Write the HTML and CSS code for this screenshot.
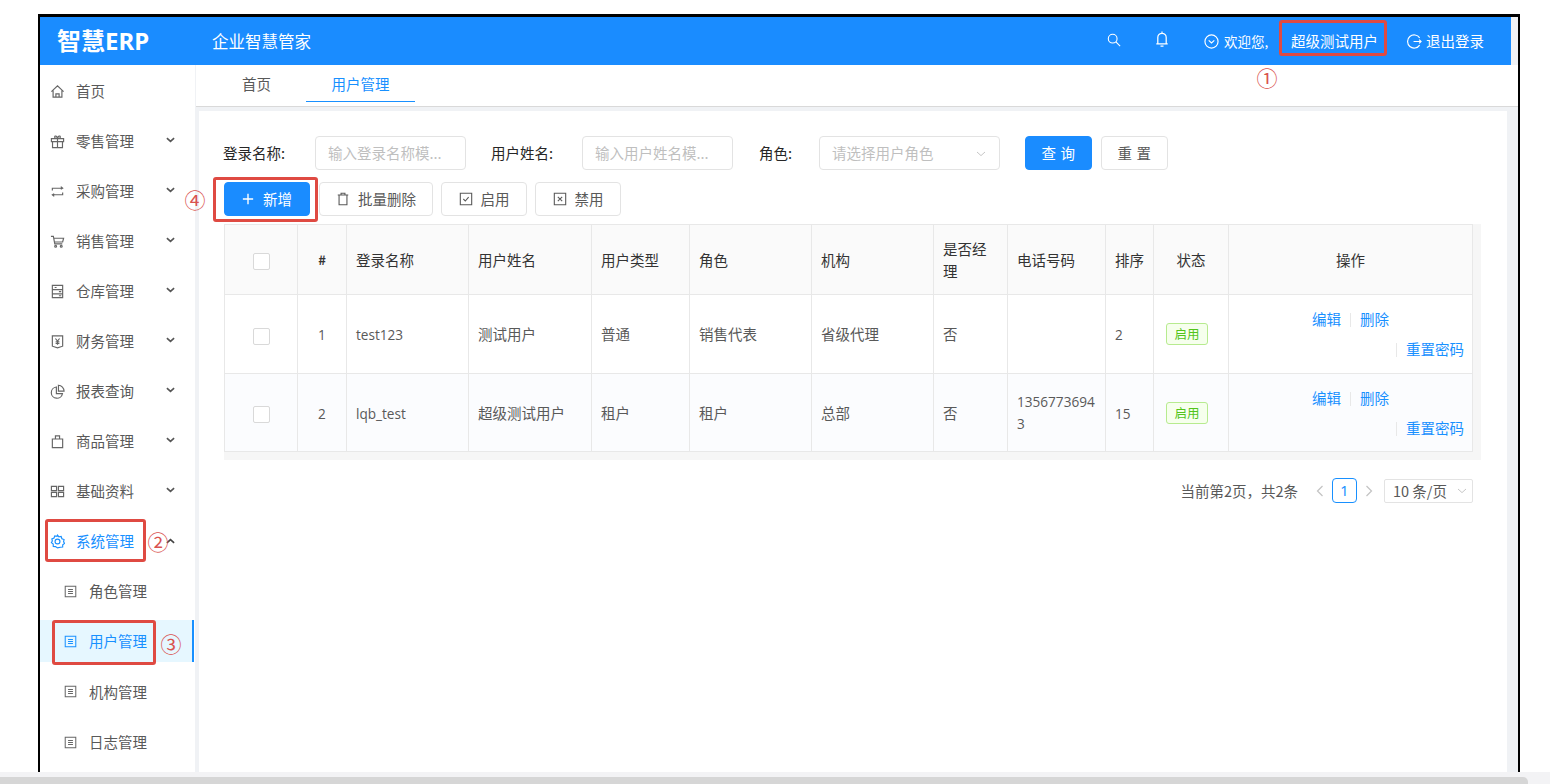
FILE: index.html
```html
<!DOCTYPE html>
<html lang="zh">
<head>
<meta charset="utf-8">
<title>智慧ERP</title>
<link rel="stylesheet" href="styles.css">
</head>
<body>
<svg class="sprite" aria-hidden="true">
  <symbol id="i-home" viewBox="0 0 16 16"><path d="M1.500 8.200 8 2l6.500 6.200M3.300 7v7h9.400V7M6.300 14v-3.500h3.400V14"/></symbol>
  <symbol id="i-gift" viewBox="0 0 16 16"><path d="M1.500 5h13v3.200h-13zM2.700 8.200V14.500h10.600V8.200M8 5v9.500M8 5C6.500 5 4.800 4.500 5 3s2.500-1.200 3 2c.5-3.200 2.800-3.500 3-2s-1.500 2-3 2"/></symbol>
  <symbol id="i-swap" viewBox="0 0 16 16"><path d="M2.500 7V4.500h11M11.500 2.800l2 1.700-2 1M13.500 9v2.500h-11M4.500 13.200l-2-1.700 2-1"/></symbol>
  <symbol id="i-cart" viewBox="0 0 16 16"><path d="M1 2.500h2.600l1.500 8h8M4 4.500h10.500l-1 4H4.800"/><circle cx="6" cy="13" r="1"/><circle cx="12" cy="13" r="1"/></symbol>
  <symbol id="i-store" viewBox="0 0 16 16"><path d="M2.500 1.500h11v13h-11zM2.500 6h11M2.500 10.500h11M9.500 8.200h2.500M9.500 12.500h2.500M5 3.700h2"/></symbol>
  <symbol id="i-book" viewBox="0 0 16 16"><path d="M2.500 2h11v11l-5.500 1.800L2.500 13zM5.800 4.800 8 7.500l2.200-2.700M8 7.500v4M6 8.300h4M6 10h4"/></symbol>
  <symbol id="i-pie" viewBox="0 0 16 16"><path d="M6.800 3.200a6 6 0 1 0 6.500 7H6.800zM9 1.300v6.300h6A6.300 6.300 0 0 0 9 1.300z"/></symbol>
  <symbol id="i-bag" viewBox="0 0 16 16"><path d="M2.500 5.300h11v9.200h-11zM5.800 5.300V2h4.400v3.300"/></symbol>
  <symbol id="i-grid" viewBox="0 0 16 16"><path d="M1.500 2.500h5.500v4.500H1.500zM9 2.500h5.500v4.500H9zM1.500 9h5.500v4.500H1.500zM9 9h5.500v4.500H9z"/></symbol>
  <symbol id="i-gear" viewBox="0 0 16 16"><path d="M8 1.200l1.500 1.900 2.400-.4.800 2.300 2.300.9-.5 2.300 1 1.800-1.900 1.500-.1 2.400-2.400.2L8 14.800l-2.100-1.400-2.400-.2-.1-2.400L1.500 9.300l1-1.800L2 5.200l2.300-.9.800-2.300 2.400.4z"/><circle cx="8" cy="8" r="2.600"/></symbol>
  <symbol id="i-doc" viewBox="0 0 16 16"><path d="M1.500 1.500h13v13h-13zM5 5.500h6M5 8h6M5 10.500h6"/></symbol>
  <symbol id="i-down" viewBox="0 0 10 6"><path d="M1 1l4 3.600L9 1"/></symbol>
  <symbol id="i-up" viewBox="0 0 10 6"><path d="M1 5l4-3.600L9 5"/></symbol>
  <symbol id="i-search" viewBox="0 0 16 16"><circle cx="6.500" cy="6.500" r="5"/><path d="M10.200 10.200l4.800 4.800"/></symbol>
  <symbol id="i-bell" viewBox="0 0 16 16"><path d="M3.800 12.500V6.500a4.200 4.200 0 0 1 8.400 0v6M2.300 12.800h11.400M8 .5v1.800M6.500 15h3"/></symbol>
  <symbol id="i-circle-down" viewBox="0 0 16 16"><circle cx="8" cy="8" r="7"/><path d="M5 6.800l3 2.800 3-2.800"/></symbol>
  <symbol id="i-logout" viewBox="0 0 16 16"><path d="M13.500 4.200a7 7 0 1 0 0 7.600M7 8h8M13 6l2 2-2 2"/></symbol>
  <symbol id="i-plus" viewBox="0 0 14 14"><path d="M7 1v12M1 7h12"/></symbol>
  <symbol id="i-trash" viewBox="0 0 16 16"><path d="M2 3.500h12M5.800 3.500V1.500h4.400v2M3.500 3.500v11h9v-11"/></symbol>
  <symbol id="i-check" viewBox="0 0 16 16"><path d="M1.500 1.500h13v13h-13zM5 8l2.200 2.300L11 5.800"/></symbol>
  <symbol id="i-cross" viewBox="0 0 16 16"><path d="M1.500 1.500h13v13h-13zM5.500 5.500l5 5M10.500 5.500l-5 5"/></symbol>
  <symbol id="i-left" viewBox="0 0 8 12"><path d="M6.500 1 1.500 6l5 5"/></symbol>
  <symbol id="i-right" viewBox="0 0 8 12"><path d="M1.500 1l5 5-5 5"/></symbol>
</svg>

<div class="frame">
  <header class="topbar">
    <div class="logo">智慧ERP</div>
    <div class="slogan">企业智慧管家</div>
    <div class="topbar-right">
      <svg class="ico top-search"><use href="#i-search"/></svg>
      <svg class="ico top-bell"><use href="#i-bell"/></svg>
      <svg class="ico top-small"><use href="#i-circle-down"/></svg>
      <span class="welcome">欢迎您,</span>
      <span class="username">超级测试用户</span>
      <svg class="ico top-small top-logout"><use href="#i-logout"/></svg>
      <span>退出登录</span>
    </div>
  </header>

  <div class="body-row">
    <nav class="sidebar">
      <a class="nav-item"><svg class="ico"><use href="#i-home"/></svg><span>首页</span></a>
      <a class="nav-item"><svg class="ico"><use href="#i-gift"/></svg><span>零售管理</span><svg class="chev"><use href="#i-down"/></svg></a>
      <a class="nav-item"><svg class="ico"><use href="#i-swap"/></svg><span>采购管理</span><svg class="chev"><use href="#i-down"/></svg></a>
      <a class="nav-item"><svg class="ico"><use href="#i-cart"/></svg><span>销售管理</span><svg class="chev"><use href="#i-down"/></svg></a>
      <a class="nav-item"><svg class="ico"><use href="#i-store"/></svg><span>仓库管理</span><svg class="chev"><use href="#i-down"/></svg></a>
      <a class="nav-item"><svg class="ico"><use href="#i-book"/></svg><span>财务管理</span><svg class="chev"><use href="#i-down"/></svg></a>
      <a class="nav-item"><svg class="ico"><use href="#i-pie"/></svg><span>报表查询</span><svg class="chev"><use href="#i-down"/></svg></a>
      <a class="nav-item"><svg class="ico"><use href="#i-bag"/></svg><span>商品管理</span><svg class="chev"><use href="#i-down"/></svg></a>
      <a class="nav-item"><svg class="ico"><use href="#i-grid"/></svg><span>基础资料</span><svg class="chev"><use href="#i-down"/></svg></a>
      <a class="nav-item nav-open"><svg class="ico"><use href="#i-gear"/></svg><span>系统管理</span><svg class="chev"><use href="#i-up"/></svg></a>
      <a class="nav-item nav-sub"><svg class="ico"><use href="#i-doc"/></svg><span>角色管理</span></a>
      <a class="nav-item nav-sub nav-active"><svg class="ico"><use href="#i-doc"/></svg><span>用户管理</span></a>
      <a class="nav-item nav-sub"><svg class="ico"><use href="#i-doc"/></svg><span>机构管理</span></a>
      <a class="nav-item nav-sub"><svg class="ico"><use href="#i-doc"/></svg><span>日志管理</span></a>
    </nav>

    <main class="main">
      <div class="tabs">
        <div class="tab">首页</div>
        <div class="tab tab-active">用户管理</div>
      </div>
      <section class="card">
        <form class="filters">
          <label class="f-label f-login">登录名称:</label>
          <div class="input i-login">输入登录名称模...</div>
          <label class="f-label f-name">用户姓名:</label>
          <div class="input i-name">输入用户姓名模...</div>
          <label class="f-label f-role">角色:</label>
          <div class="input i-role">请选择用户角色<svg class="sel-arrow"><use href="#i-down"/></svg></div>
          <div class="btn btn-primary b-query">查 询</div>
          <div class="btn b-reset">重 置</div>
        </form>
        <div class="actions">
          <div class="btn btn-primary b-add"><svg class="ico-plus"><use href="#i-plus"/></svg>新增</div>
          <div class="btn b-del"><svg class="ico"><use href="#i-trash"/></svg>批量删除</div>
          <div class="btn b-on"><svg class="ico"><use href="#i-check"/></svg>启用</div>
          <div class="btn b-off"><svg class="ico"><use href="#i-cross"/></svg>禁用</div>
        </div>
        <div class="table-wrap">
          <table class="grid">
            <colgroup>
              <col class="c1"><col class="c2"><col class="c3"><col class="c4"><col class="c5"><col class="c6"><col class="c7"><col class="c8"><col class="c9"><col class="c10"><col class="c11"><col class="c12">
            </colgroup>
            <thead>
              <tr>
                <th class="center"><span class="cb"></span></th>
                <th class="center hash">#</th>
                <th>登录名称</th><th>用户姓名</th><th>用户类型</th><th>角色</th><th>机构</th><th>是否经理</th><th>电话号码</th><th>排序</th>
                <th class="center">状态</th><th class="center">操作</th>
              </tr>
            </thead>
            <tbody>
              <tr class="r1">
                <td class="center"><span class="cb"></span></td><td class="center lat">1</td>
                <td class="lat">test123</td><td>测试用户</td><td>普通</td><td>销售代表</td><td>省级代理</td><td>否</td><td></td><td class="lat">2</td>
                <td class="status"><span class="tag">启用</span></td>
                <td class="ops"><div class="ops-a"><a>编辑</a><i></i><a>删除</a></div><div class="ops-b"><i></i><a>重置密码</a></div></td>
              </tr>
              <tr class="r2">
                <td class="center"><span class="cb"></span></td><td class="center lat">2</td>
                <td class="lat">lqb_test</td><td>超级测试用户</td><td>租户</td><td>租户</td><td>总部</td><td>否</td><td class="phone lat">13567736943</td><td class="lat">15</td>
                <td class="status"><span class="tag">启用</span></td>
                <td class="ops"><div class="ops-a"><a>编辑</a><i></i><a>删除</a></div><div class="ops-b"><i></i><a>重置密码</a></div></td>
              </tr>
            </tbody>
          </table>
        </div>
        <div class="pager">
          <span class="pg-total">当前第2页，共2条</span>
          <svg class="pg-arrow"><use href="#i-left"/></svg>
          <span class="pg-num">1</span>
          <svg class="pg-arrow"><use href="#i-right"/></svg>
          <span class="pg-size">10 条/页<svg class="sel-arrow"><use href="#i-down"/></svg></span>
        </div>
      </section>
    </main>
  </div>
</div>

<div class="hscroll"><div class="hthumb"></div></div>

<div class="mark m-user"></div>
<div class="mark m-sys"></div>
<div class="mark m-sub"></div>
<div class="mark m-add"></div>
<span class="num n1">①</span>
<span class="num n2">②</span>
<span class="num n3">③</span>
<span class="num n4">④</span>
</body>
</html>
```

FILE: styles.css
```css
* { box-sizing: border-box; }
html, body { margin: 0; height: 784px; overflow: hidden; background: #fff; }
body {
  position: relative;
  font: 14.5px/22px "Noto Sans", "Noto Sans CJK SC", sans-serif;
  color: #595959;
}
.sprite { display: none; }
svg { fill: none; stroke: currentColor; stroke-width: 1.25; flex: none; }

.frame {
  margin: 14px 0 0 38px;
  width: 1482px;
  height: 758px;
  border: solid #000;
  border-width: 3px 2px 0;
  background: #f0f2f5;
  overflow: hidden;
}

/* top bar */
.topbar {
  height: 48px;
  margin-right: 7px;
  background: #1a8cff;
  color: #fff;
  display: flex;
  align-items: center;
  font-family: "Noto Sans CJK SC", sans-serif;
}
.logo { margin-left: 17px; width: 155px; font-size: 24px; font-weight: 700; font-family: "Noto Sans", "Noto Sans CJK SC", sans-serif; }
.slogan { font-size: 16.5px; }
.topbar-right { margin-left: auto; margin-right: 27px; display: flex; align-items: center; }
.topbar-right .ico { width: 15px; height: 15px; }
.topbar-right .top-search { width: 14px; height: 14px; margin-bottom: 2px; }
.topbar-right .top-bell { width: 16px; height: 16px; margin: 0 0 4px 33px; }
.topbar-right .top-small { margin-left: 34px; }
.topbar-right .top-logout { margin: 0 4px 0 29px; }
.welcome { margin-left: 5px; font-size: 13.5px; width: 67px; }
.username { width: 87px; white-space: nowrap; }

.body-row { display: flex; height: 707px; }

/* sidebar */
.sidebar { width: 155px; flex: none; background: #fff; padding-top: 1px; }
.nav-item {
  height: 50px;
  display: flex;
  align-items: center;
  padding-left: 10px;
  position: relative;
  font-family: "Noto Sans CJK SC", sans-serif;
}
.nav-item .ico { width: 15px; height: 15px; margin-right: 11px; color: #666; }
.chev { width: 9px; height: 6px; margin: 0 0 3px 32px; stroke-width: 1.8; color: #555; }
.nav-open { color: #1890ff; }
.nav-open .ico { color: #1890ff; }
.nav-open .chev { color: #444; margin-bottom: 0; }
.nav-sub { padding-left: 24px; height: 50.300px; }
.nav-sub .ico { width: 13px; height: 13px; margin-right: 12px; }
.nav-active { color: #1890ff; }
.nav-active .ico { color: #1890ff; }
.nav-active::before {
  content: "";
  position: absolute;
  left: 0; right: 1px; top: 4px; bottom: 5px;
  background: #e6f7ff;
  border-right: 2px solid #1890ff;
}
.nav-active > * { position: relative; }

/* main */
.main { flex: 1; min-width: 0; }
.tabs {
  height: 42px;
  margin-left: 1px;
  background: #fff;
  border-bottom: 1px solid #d9d9d9;
  display: flex;
  padding-left: 17px;
  font-family: "Noto Sans CJK SC", sans-serif;
}
.tab { width: 87px; height: 37px; text-align: center; line-height: 38px; }
.tab-active { width: 109px; margin-left: 6px; color: #1890ff; border-bottom: 1px solid #1890ff; }

.card {
  margin: 4px 11px 0 4px;
  height: 661px;
  background: #fff;
  padding: 25px 0 0 25px;
  font-family: "Noto Sans CJK SC", sans-serif;
}

.filters { display: flex; align-items: center; height: 34px; margin-left: -1px; }
.f-label { color: #262626; white-space: nowrap; }
.f-login { width: 92px; }
.f-name { width: 91px; margin-left: 25px; }
.f-role { width: 60px; margin-left: 26px; }
.input {
  height: 34px;
  border: 1px solid #e3e3e3;
  border-radius: 4px;
  color: #bfbfbf;
  padding-left: 12px;
  line-height: 32px;
  white-space: nowrap;
  position: relative;
}
.i-login, .i-name { width: 151px; }
.i-role { width: 181px; }
.sel-arrow { width: 10px; height: 6px; color: #bfbfbf; position: absolute; right: 13px; top: 14px; stroke-width: .9; }

.btn {
  height: 34px;
  border: 1px solid #e3e3e3;
  border-radius: 4px;
  display: flex;
  align-items: center;
  justify-content: center;
  color: #595959;
  background: #fff;
  white-space: nowrap;
}
.btn-primary { background: #1a8cff; border-color: #1a8cff; color: #fff; }
.b-query { width: 67px; margin-left: 25px; letter-spacing: .6px; }
.b-reset { width: 67px; margin-left: 9px; letter-spacing: .6px; }

.actions { display: flex; margin-top: 12px; }
.actions .btn .ico { width: 14px; height: 14px; margin-right: 8px; }
.ico-plus { width: 12px; height: 12px; margin-right: 9px; stroke-width: 1.6; }
.b-add { width: 86px; }
.b-del { width: 114px; margin-left: 9px; }
.b-on { width: 86px; margin-left: 8px; }
.b-off { width: 86px; margin-left: 8px; }

/* table */
.table-wrap { margin-top: 8px; width: 1257px; height: 236px; background: #f6f6f6; }
.grid { width: 1248px; table-layout: fixed; border-collapse: collapse; }
.c1 { width: 73px; } .c2 { width: 49px; } .c3 { width: 122px; } .c4 { width: 123px; }
.c5 { width: 98px; } .c6 { width: 122px; } .c7 { width: 122px; } .c8 { width: 74px; }
.c9 { width: 98px; } .c10 { width: 48px; } .c11 { width: 75px; } .c12 { width: 244px; }
th, td {
  border: 1px solid #e8e8e8;
  padding: 0 9px;
  text-align: left;
  vertical-align: middle;
  background: #fff;
}
th { height: 70px; background: #fafafa; color: #333; font-weight: 400; }
.hash { font-weight: 700; font-size: 13px; }
.r1 td { height: 79px; }
.r2 td { height: 78px; background: #fbfcfe; }
.grid .center { text-align: center; }
.lat { font-family: "Open Sans", "Noto Sans CJK SC", sans-serif; font-size: 13.6px; padding-top: 2px; }
.phone { word-break: break-all; padding-right: 8px; padding-top: 0; }
.cb { display: inline-block; width: 17px; height: 17px; border: 1px solid #d9d9d9; border-radius: 2px; background: #fff; vertical-align: middle; }
.grid .status { padding: 0 12px; }
.tag {
  display: block;
  width: 42px;
  height: 22px;
  text-align: center;
  line-height: 20px;
  font-size: 12.5px;
  color: #52c41a;
  background: #f6ffed;
  border: 1px solid #b7eb8f;
  border-radius: 3px;
}
.ops { color: #1890ff; padding: 0 8px 0 0; line-height: 30px; }
.ops i { display: inline-block; width: 1px; height: 14px; background: #e8e8e8; vertical-align: -2px; }
.ops-a { text-align: center; padding-left: 8px; }
.ops-a i { margin: 0 9px; }
.ops-b { text-align: right; }
.ops-b i { margin-right: 9px; }

/* pager */
.pager { display: flex; align-items: center; width: 1249px; height: 25px; margin-top: 18px; justify-content: flex-end; }
.pg-total { margin-right: 18px; }
.pg-arrow { width: 8px; height: 12px; color: #c4c4c4; }
.pg-num { width: 25px; height: 25px; margin: 0 8px; border: 1px solid #1890ff; border-radius: 4px; color: #1890ff; text-align: center; line-height: 23px; font-family: "Noto Sans", sans-serif; }
.pg-size { width: 89px; height: 24px; margin-left: 11px; border: 1px solid #e3e3e3; border-radius: 2px; padding-left: 8px; line-height: 22px; position: relative; white-space: nowrap; }
.pg-size .sel-arrow { right: 5px; top: 8px; }

/* page scrollbar strip */
.hscroll { height: 12px; background: #f3f3f5; padding-top: 5px; }
.hthumb { width: 1528px; height: 7px; background: #d6d6d6; border-radius: 0 5px 0 0; }

/* red annotations over the screenshot */
.mark { position: absolute; border: 3px solid #df4a42; border-radius: 3px; }
.m-user { left: 1279px; top: 20px; width: 108px; height: 36px; }
.m-sys { left: 45px; top: 519px; width: 101px; height: 43px; }
.m-sub { left: 52px; top: 620px; width: 104px; height: 45px; }
.m-add { left: 213px; top: 177px; width: 105px; height: 45px; }
.num { position: absolute; color: #d9534f; font: 21px/22px "Noto Sans CJK SC", sans-serif; width: 22px; text-align: center; }
.n1 { left: 1256px; top: 66px; }
.n2 { left: 147px; top: 530px; }
.n3 { left: 160px; top: 632px; }
.n4 { left: 184px; top: 188px; }
```
